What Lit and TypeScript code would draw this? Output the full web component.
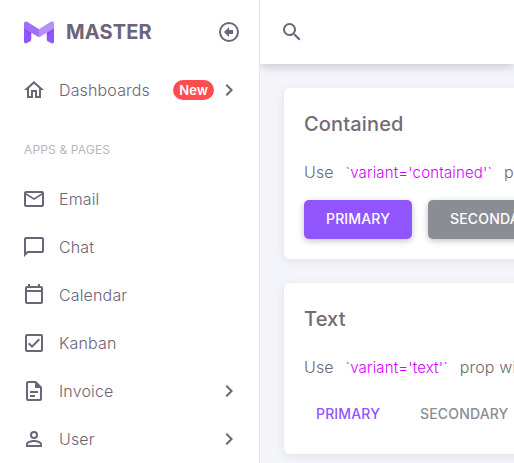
import { LitElement, html, css, svg, nothing } from "lit";
import { customElement, property } from "lit/decorators.js";

const icons: Record<string, string> = {
  home: "M12 5.69L17 10.19V18H15V12H9V18H7V10.19L12 5.69M12 3L2 12H5V20H11V14H13V20H19V12H22L12 3Z",
  email:
    "M22 6C22 4.9 21.1 4 20 4H4C2.9 4 2 4.9 2 6V18C2 19.1 2.9 20 4 20H20C21.1 20 22 19.1 22 18V6M20 6L12 11L4 6H20M20 18H4V8L12 13L20 8V18Z",
  chat: "M20 2H4A2 2 0 0 0 2 4V22L6 18H20A2 2 0 0 0 22 16V4A2 2 0 0 0 20 2M20 16H5.17L4 17.17V4H20V16Z",
  calendar:
    "M19 3H18V1H16V3H8V1H6V3H5C3.89 3 3 3.9 3 5V19C3 20.11 3.9 21 5 21H19C20.11 21 21 20.11 21 19V5C21 3.9 20.11 3 19 3M19 19H5V9H19V19M19 7H5V5H19V7Z",
  kanban:
    "M19,3H5A2,2 0 0,0 3,5V19A2,2 0 0,0 5,21H19A2,2 0 0,0 21,19V5A2,2 0 0,0 19,3M19,5V19H5V5H19M10,17L6,13L7.41,11.58L10,14.17L16.59,7.58L18,9Z",
  invoice:
    "M6,2A2,2 0 0,0 4,4V20A2,2 0 0,0 6,22H18A2,2 0 0,0 20,20V8L14,2H6M6,4H13V9H18V20H6V4M8,12V14H16V12H8M8,16V18H13V16H8Z",
  user: "M12,4A4,4 0 0,1 16,8A4,4 0 0,1 12,12A4,4 0 0,1 8,8A4,4 0 0,1 12,4M12,6A2,2 0 0,0 10,8A2,2 0 0,0 12,10A2,2 0 0,0 14,8A2,2 0 0,0 12,6M12,13C14.67,13 20,14.33 20,17V20H4V17C4,14.33 9.33,13 12,13M12,14.9C9.03,14.9 5.9,16.36 5.9,17V18.1H18.1V17C18.1,16.36 14.97,14.9 12,14.9Z",
  search:
    "M9.5,3A6.5,6.5 0 0,1 16,9.5C16,11.11 15.41,12.59 14.44,13.73L14.71,14H15.5L20.5,19L19,20.5L14,15.5V14.71L13.73,14.44C12.59,15.41 11.11,16 9.5,16A6.5,6.5 0 0,1 3,9.5A6.5,6.5 0 0,1 9.5,3M9.5,5C7,5 5,7 5,9.5C5,12 7,14 9.5,14C12,14 14,12 14,9.5C14,7 12,5 9.5,5Z",
  chevron: "M8.59,16.58L13.17,12L8.59,7.41L10,6L16,12L10,18L8.59,16.58Z",
  collapse:
    "M12 2A10 10 0 1 0 12 22A10 10 0 1 0 12 2M12 4A8 8 0 1 1 12 20A8 8 0 1 1 12 4M7 12L12 7V10H16V14H12V17Z",
};

const icon = (name: string) => html`
  <svg class="icon" width="24" height="24" viewBox="0 0 24 24" aria-hidden="true">
    ${svg`<path fill="currentColor" fill-rule="evenodd" d=${icons[name]}></path>`}
  </svg>
`;

interface NavEntry {
  label: string;
  icon: string;
  badge?: string;
  group?: boolean;
}

const dashboards: NavEntry = { label: "Dashboards", icon: "home", badge: "New", group: true };

const pages: NavEntry[] = [
  { label: "Email", icon: "email" },
  { label: "Chat", icon: "chat" },
  { label: "Calendar", icon: "calendar" },
  { label: "Kanban", icon: "kanban" },
  { label: "Invoice", icon: "invoice", group: true },
  { label: "User", icon: "user", group: true },
];

const base = css`
  * {
    box-sizing: border-box;
  }
  .icon {
    display: block;
    flex: none;
  }
  button {
    font: inherit;
    color: inherit;
    letter-spacing: inherit;
    border: 0;
    padding: 0;
    background: none;
    cursor: pointer;
  }
`;

@customElement("side-nav")
export class SideNav extends LitElement {
  static styles = [
    base,
    css`
      :host {
        display: block;
        background: #fff;
        border-right: 1px solid #e4e4ea;
        color: #6c6478;
      }
      .brand {
        display: flex;
        align-items: center;
        gap: 12px;
        height: 64px;
        padding: 0 18px 0 24px;
      }
      .name {
        flex: 1;
        font-size: 20px;
        font-weight: 700;
        line-height: 24px;
      }
      .list {
        list-style: none;
        margin: 0;
        padding: 0;
      }
      .row {
        display: flex;
        align-items: center;
        gap: 13px;
        height: 44px;
        margin: 4px 0;
        padding: 0 18px 0 22px;
        color: inherit;
        text-decoration: none;
      }
      .label {
        flex: 1;
        font-size: 16px;
        font-weight: 300;
        line-height: 24px;
      }
      .end {
        display: flex;
        align-items: center;
        gap: 3px;
      }
      .badge {
        padding: 0 6px;
        border-radius: 10px;
        background: #ff4c51;
        color: #fff;
        font-size: 13px;
        font-weight: 600;
        line-height: 20px;
      }
      .section {
        margin: 28px 0 17px;
        padding: 0 24px;
        color: #b9b6be;
        font-size: 12px;
        font-weight: 400;
        line-height: 20px;
      }
    `,
  ];

  private row(item: NavEntry) {
    return html`<li>
      <a class="row" href="#">
        ${icon(item.icon)}
        <span class="label">${item.label}</span>
        ${item.group
          ? html`<span class="end"
              >${item.badge ? html`<span class="badge">${item.badge}</span>` : nothing}${icon("chevron")}</span
            >`
          : nothing}
      </a>
    </li>`;
  }

  render() {
    return html`
      <div class="brand">
        <svg width="30" height="25" viewBox="0 0 30 23" aria-hidden="true">
          <g transform="translate(0 -1)">
            <path
              fill="#9155fd"
              d="M30,21.39C30,21.75 29.9,22.11 29.72,22.42C29.15,23.37 27.92,23.68 26.97,23.11L23.71,21.16C23.11,20.8 22.74,20.15 22.74,19.44V12.74L15,17.18L7.26,12.74V19.44C7.26,20.15 6.89,20.8 6.29,21.16L3.03,23.11C2.08,23.68 0.85,23.37 0.28,22.42C0.1,22.11 0,21.75 0,21.39V3.57C0,2.47 0.9,1.57 2,1.57C2.37,1.57 2.73,1.67 3.05,1.87L15,9.19L26.95,1.87C27.27,1.67 27.63,1.57 28,1.57C29.1,1.57 30,2.47 30,3.57Z"
            ></path>
            <path fill="#000" fill-opacity="0.08" d="M0,8.59L7.26,12.75V16.83ZM0,8.59L7.26,12.64V15.14ZM30,8.59L22.74,12.75V16.83ZM30,8.59L22.74,12.64V15.14Z"></path>
            <path fill="#fff" fill-opacity="0.15" d="M3.05,1.87L15,9.19V17.18L0,8.59V3.57C0,2.47 0.9,1.57 2,1.57C2.37,1.57 2.73,1.67 3.05,1.87Z"></path>
            <path fill="#fff" fill-opacity="0.35" d="M26.95,1.87L15,9.19V17.18L30,8.59V3.57C30,2.47 29.1,1.57 28,1.57C27.63,1.57 27.27,1.67 26.95,1.87Z"></path>
          </g>
        </svg>
        <span class="name">MASTER</span>
        <button aria-label="Collapse menu">${icon("collapse")}</button>
      </div>
      <nav>
        <ul class="list">
          ${this.row(dashboards)}
        </ul>
        <h2 class="section">APPS &amp; PAGES</h2>
        <ul class="list">
          ${pages.map((p) => this.row(p))}
        </ul>
      </nav>
    `;
  }
}

@customElement("variant-card")
export class VariantCard extends LitElement {
  @property() heading = "";
  @property() variant = "contained";

  static styles = [
    base,
    css`
      :host {
        display: block;
        padding: 20px;
        border-radius: 6px;
        background: #fff;
        box-shadow: 0 2px 10px rgba(58, 53, 65, 0.1);
        overflow: hidden;
        white-space: nowrap;
      }
      .title {
        margin: 0 0 20px;
        color: #726c78;
        font-size: 20px;
        font-weight: 500;
        line-height: 32px;
      }
      .text {
        margin: 0 0 16px;
        font-size: 16px;
        font-weight: 300;
        line-height: 24px;
      }
      .code {
        margin: 0 7px;
        color: #d400ff;
        font-family: inherit;
        font-size: 15px;
        line-height: 20px;
      }
      .actions {
        display: flex;
        gap: 16px;
      }
      .button {
        flex: none;
        border-radius: 5px;
        font-size: 14px;
        font-weight: 500;
        line-height: 24px;
      }
      .contained {
        padding: 7px 22px 8px;
        color: #fff;
        box-shadow: 0 2px 6px rgba(58, 53, 65, 0.3);
      }
      .contained.primary {
        background: #9155fd;
      }
      .contained.secondary {
        background: #8a8d93;
      }
      .text-only {
        padding: 7px 12px 8px;
      }
      .text-only.primary {
        color: #9155fd;
      }
      .text-only.secondary {
        color: #8a8d93;
      }
    `,
  ];

  render() {
    const kind = this.variant === "text" ? "text-only" : "contained";
    return html`
      <h2 class="title">${this.heading}</h2>
      <p class="text">Use <code class="code">\`variant='${this.variant}'\`</code> prop with</p>
      <div class="actions">
        <button class="button ${kind} primary">PRIMARY</button>
        <button class="button ${kind} secondary">SECONDARY</button>
      </div>
    `;
  }
}

@customElement("app-root")
export class AppRoot extends LitElement {
  static styles = [
    base,
    css`
      :host {
        display: grid;
        grid-template-columns: 260px minmax(0, 1fr);
        min-height: 100vh;
        overflow: hidden;
        background: #f4f5fa;
        color: #6c6870;
        font-family: Inter, "Liberation Sans", sans-serif;
        letter-spacing: 0.15px;
      }
      .main {
        overflow: hidden;
      }
      .bar {
        display: flex;
        align-items: center;
        height: 64px;
        padding: 0 20px;
        background: #fff;
        color: #6c6478;
        box-shadow: 0 2px 10px rgba(58, 53, 65, 0.26);
      }
      .cards {
        display: grid;
        gap: 24px;
        padding: 24px;
        margin-right: -48px;
      }
      @media (max-height: 480px) {
        :host {
          height: 100vh;
        }
      }
    `,
  ];

  render() {
    return html`
      <side-nav></side-nav>
      <div class="main">
        <header class="bar">
          <button aria-label="Search">${icon("search")}</button>
        </header>
        <main class="cards">
          <variant-card heading="Contained" variant="contained"></variant-card>
          <variant-card heading="Text" variant="text"></variant-card>
        </main>
      </div>
    `;
  }
}
